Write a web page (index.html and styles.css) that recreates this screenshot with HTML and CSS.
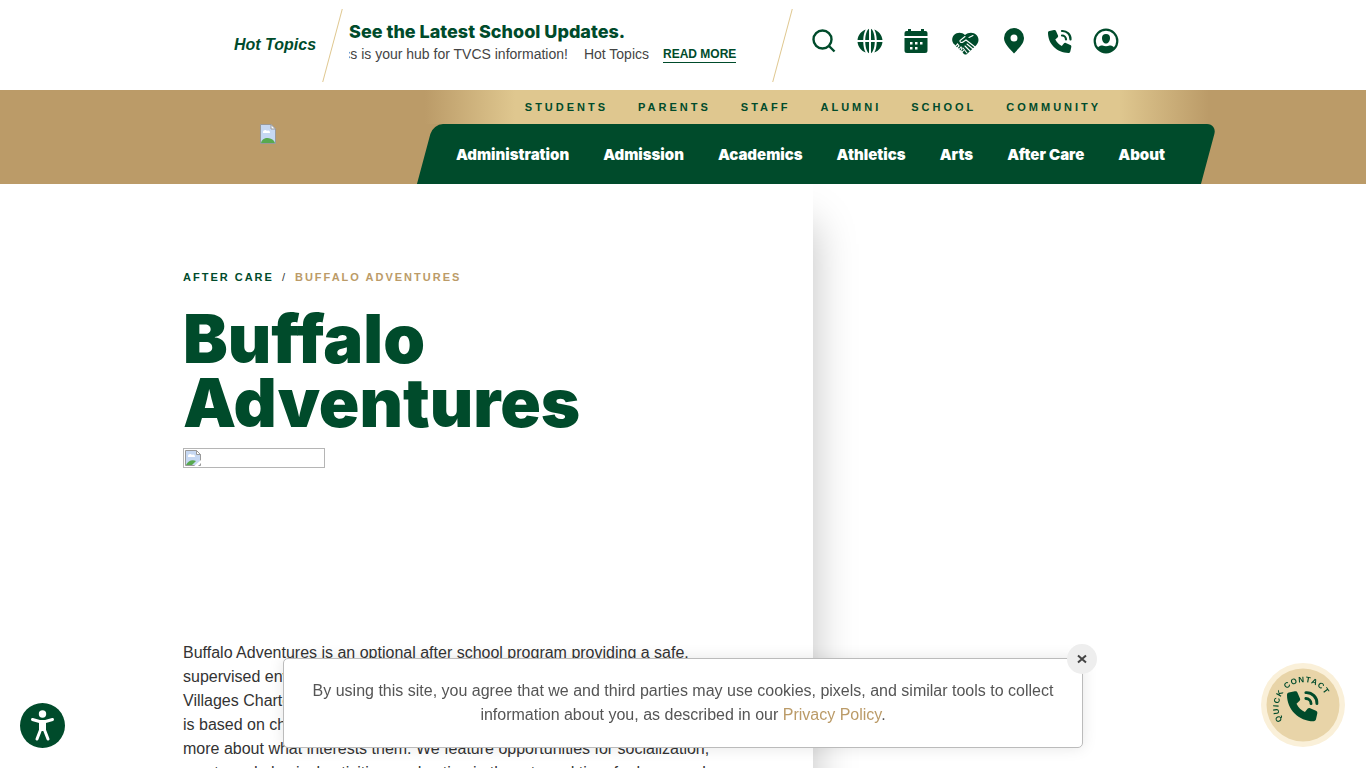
FILE: index.html
```html
<!DOCTYPE html>
<html lang="en">
<head>
    <meta charset="UTF-8">
    <meta name="viewport" content="width=device-width, initial-scale=1.0">
    <title>Buffalo Adventures</title>
    <link rel="stylesheet" href="styles.css">
</head>
<body>
    <header>
        <div class="topbar">
            <div class="hot-label">Hot Topics</div>
            <div class="slash"></div>
            <div class="ticker">
                <div class="ticker-title">See the Latest School Updates.</div>
                <div class="ticker-row">
                    <div class="ticker-text"><span>Hot Topics is your hub for TVCS information!</span><span>Hot Topics</span></div>
                    <a href="#" class="read-more">READ MORE</a>
                </div>
            </div>
            <div class="slash"></div>
            <div class="tools">
                <a href="#" aria-label="Search"><svg width="24" height="24" viewBox="0 0 24 24" fill="none" stroke="currentColor" stroke-width="2.4"><circle cx="10.500" cy="10.500" r="9"/><path d="M17 17L22.500 22.500"/></svg></a>
                <a href="#" aria-label="Language"><svg width="24" height="24" viewBox="0 0 512 512" overflow="visible" fill="currentColor"><path d="M235 -4C196 15 158 105 154 235h81zM277 -4c39 19 77 109 81 239h-81zM235 516c-39-19-77-109-81-239h81zM277 516c39-19 77-109 81-239h-81zM164 10C70 45 0 130-10 235h122c3-90 20-170 52-225zM348 10c94 35 164 120 174 225H400c-3-90-20-170-52-225zM164 502C70 467 0 382-10 277h122c3 90 20 170 52 225zM348 502c94-35 164-120 174-225H400c-3 90-20 170-52 225z"/></svg></a>
                <a href="#" aria-label="Calendar"><svg width="24" height="24" viewBox="0 0 24 24" fill="currentColor"><path d="M4 2V0h3v2h10V0h3v2h1.500a2 2 0 0 1 2 2v3H.5V4a2 2 0 0 1 2-2zM.5 9h23v12.500a2.500 2.500 0 0 1-2.500 2.500H3a2.500 2.500 0 0 1-2.500-2.500z"/><path fill="#fff" d="M6 13h2.500v2.500H6zM11 13h2.500v2.500H11zM16 13h2.500v2.500H16zM6 18h2.500v2.500H6zM11 18h2.500v2.500H11z"/></svg></a>
                <a href="#" aria-label="Giving"><svg width="30" height="24" viewBox="0 0 30 24" overflow="visible"><path fill="currentColor" d="M15 6C12 3 7 3 4 6c-3 3.500-2 7.500 1 10.500L14 25c1 .8 2 .8 3 0l9-8.500c3-3 3.500-7 .5-10.500-3-3-8-3-11.500 0z"/><path fill="none" stroke="#fff" stroke-width="1.100" stroke-linecap="round" d="M15 7.500l-5 4c-.5 2 1.500 2.500 3 1.500l3-2 9 7M19 8.500l4-2M17 15l6 5M15 17l5 5M13 19l4 5M3.500 15.500l2 2 2-2.500 1.500 2-2 2 2 1.500 2-2.500 1 2-1.500 2 1.500 1.500 1.500-2"/></svg></a>
                <a href="#" aria-label="Location"><svg width="24" height="24" viewBox="0 0 24 24" overflow="visible"><path fill="currentColor" fill-rule="evenodd" d="M12-1A10 10 0 0 0 2 9c0 6 6 11 10 15.500C16 20 22 15 22 9A10 10 0 0 0 12-1zm0 6.500a3.500 3.500 0 1 1 0 7 3.500 3.500 0 0 1 0-7z" /></svg></a>
                <a href="#" aria-label="Phone"><svg width="24" height="24" viewBox="0 0 24 24"><path fill="currentColor" d="M1.500 2L6 1c1-.2 1.700.2 2 1l2 4.500c.3.8.1 1.500-.5 2L7.300 10.500c1.500 3 3.600 5 6.500 6.500l2-2.500c.5-.6 1.200-.8 2-.5l4.500 2c.8.3 1.200 1 1 2l-1 4.500c-.2.800-.8 1.500-1.800 1.500C9 24 0 15 0 3.800c0-1 .6-1.600 1.500-1.800z"/><path fill="none" stroke="currentColor" stroke-width="2.200" stroke-linecap="round" d="M14 2a8 8 0 0 1 8.500 8.500M14 6.500a4 4 0 0 1 4 4"/></svg></a>
                <a href="#" aria-label="Account"><svg width="24" height="24" viewBox="0 0 24 24" overflow="visible"><circle cx="12" cy="12" r="11.300" fill="none" stroke="currentColor" stroke-width="2.200"/><path fill="currentColor" d="M12 5a4 4 0 0 0-4 4c0 3.500 2 5.500 4 5.500s4-2 4-5.500a4 4 0 0 0-4-4zM3.500 19c1.500-2 3-2.500 5-2.500 2 1 5 1 7 0 2 0 3.500.5 5 2.500-4.500 5.500-12.500 5.500-17 0z"/></svg></a>
            </div>
        </div>

        <div class="main-bar">
            <a href="#" class="logo" aria-label="Home">
                <svg width="16" height="20" viewBox="0 0 16 20"><path fill="#c6d8f3" stroke="#999" d="M.5.500h10.500l4.500 4.500v14.500H.5z"/><path fill="#fff" d="M3 8c0-2 3-3 4-1 2-1 3 0 3 2H3z"/><path fill="#58a94f" d="M1 19c1-5 8-7 13-2l1 2z"/><path fill="#fff" stroke="#999" d="M11 .5V5h4.500z"/></svg>
            </a>
            <div class="menus">
                <nav class="audience-nav">
                    <a href="#">STUDENTS</a>
                    <a href="#">PARENTS</a>
                    <a href="#">STAFF</a>
                    <a href="#">ALUMNI</a>
                    <a href="#">SCHOOL</a>
                    <a href="#">COMMUNITY</a>
                </nav>
                <nav class="main-nav">
                    <a href="#">Administration</a>
                    <a href="#">Admission</a>
                    <a href="#">Academics</a>
                    <a href="#">Athletics</a>
                    <a href="#">Arts</a>
                    <a href="#">After Care</a>
                    <a href="#">About</a>
                </nav>
            </div>
        </div>
    </header>

    <main class="content">
        <div class="breadcrumb"><a href="#">AFTER CARE</a><span class="sep">/</span><span class="current">BUFFALO ADVENTURES</span></div>
        <h1>Buffalo Adventures</h1>
        <div class="picture">
            <svg width="18" height="18" viewBox="0 0 18 18"><path fill="#c6d8f3" stroke="#999" d="M1.500 1.500h11l4 4v11h-15z"/><path fill="#fff" d="M4 7c0-2 3-3 4-1 2-1 3 0 3 2H4z"/><path fill="#58a94f" d="M2 16c2-4 6-6 10-4l-4 4z"/><path fill="#fff" d="M9 18l8-7v3l-4 4z"/><path fill="#fff" stroke="#999" d="M12.500 1.500v4h4z"/></svg>
        </div>
        <p>Buffalo Adventures is an optional after school program providing a safe,<br>
        supervised environment for students enrolled at The<br>
        Villages Charter School. The program<br>
        is based on choice and lets children learn<br>
        more about what interests them. We feature opportunities for socialization,<br>
        sports and physical activities, and acting in the arts and time for homework.</p>
    </main>

    <a href="#" class="accessibility" aria-label="Accessibility">
        <svg width="45" height="45" viewBox="0 0 45 45"><circle cx="22.500" cy="22.500" r="22.500" fill="#004b2b"/><circle cx="22.500" cy="11" r="3.700" fill="#fff"/><path fill="none" stroke="#fff" stroke-width="3" stroke-linecap="round" stroke-linejoin="round" d="M12.500 16.500l7 2h6l7-2M20.500 19v8l-3.500 9M24.500 19v8l3.500 9"/><path fill="#fff" d="M19 18h7v8l-2 2h-3l-2-2z"/></svg>
    </a>

    <a href="#" class="quick-contact">
        <svg width="84" height="84" viewBox="0 0 84 84">
            <circle cx="42" cy="42" r="42" fill="#faf0d9"/>
            <circle cx="42" cy="42" r="36.500" fill="#e8d4a8"/>
            <path id="arc" fill="none" d="M21.500 57.500A25 25 0 1 1 67 50"/>
            <text class="contact-text"><textPath href="#arc">QUICK CONTACT</textPath></text>
            <g transform="translate(26 27) scale(1.300)"><path fill="#004b2b" d="M1.500 2L6 1c1-.2 1.700.2 2 1l2 4.500c.3.8.1 1.500-.5 2L7.300 10.500c1.500 3 3.600 5 6.500 6.500l2-2.500c.5-.6 1.200-.8 2-.5l4.500 2c.8.3 1.200 1 1 2l-1 4.500c-.2.800-.8 1.500-1.800 1.500C9 24 0 15 0 3.800c0-1 .6-1.600 1.500-1.800z"/><path fill="none" stroke="#004b2b" stroke-width="2.200" stroke-linecap="round" d="M14.500 2a8 8 0 0 1 8.500 8.500M14.500 6.500a4 4 0 0 1 4 4"/></g>
        </svg>
    </a>

    <div class="cookie">
        <button type="button" class="cookie-close" aria-label="Close"><svg width="10" height="10" viewBox="0 0 10 10"><path fill="none" stroke="#444" stroke-width="2" d="M1 1.500l8 7M9 1.500l-8 7"/></svg></button>
        By using this site, you agree that we and third parties may use cookies, pixels, and similar tools to collect information about you, as described in our <a href="#">Privacy Policy</a>.
    </div>

    <script>
        document.querySelector('.cookie-close').addEventListener('click', function () {
            document.querySelector('.cookie').remove();
        });
    </script>
</body>
</html>
```
FILE: styles.css
```css
* {
    box-sizing: border-box;
}
body {
    margin: 0;
    height: 100vh;
    display: flex;
    flex-direction: column;
    font-family: "Liberation Sans", Arial, sans-serif;
    font-size: 16px;
    line-height: 24px;
    color: #333;
    background-color: #fff;
    overflow: hidden;
}
a {
    color: #004b2b;
    text-decoration: none;
}
header {
    position: relative;
    z-index: 2;
    background-color: #fff;
}

/* Top bar */
.topbar {
    display: flex;
    align-items: center;
    height: 90px;
    padding-left: calc(50% - 449px);
}
.hot-label {
    width: 98px;
    font-weight: bold;
    font-style: italic;
    color: #004b2b;
}
.slash {
    width: 1px;
    height: 73px;
    background-color: #dfc78f;
    transform: skewX(-15deg);
}
.ticker {
    width: 449px;
    padding: 0 0 4px 16px;
}
.ticker-title {
    font-family: Inter, sans-serif;
    font-size: 18px;
    font-weight: 800;
    line-height: 22px;
    color: #004b2b;
}
.ticker-row {
    display: flex;
    align-items: center;
    gap: 14px;
    height: 22px;
}
.ticker-text {
    display: flex;
    justify-content: flex-end;
    gap: 16px;
    width: 300px;
    overflow: hidden;
    white-space: nowrap;
    font-size: 14px;
    color: #444;
}
.read-more {
    border-bottom: 1px solid #004b2b;
    font-size: 12px;
    font-weight: bold;
    line-height: 16px;
}
.tools {
    display: flex;
    gap: 22px;
    margin-left: 29px;
    padding-bottom: 8px;
}
.tools a,
.tools svg {
    display: block;
}

/* Gold and green bar */
.main-bar {
    display: flex;
    background-color: #bb9b68;
    padding-left: calc(50% - 423px);
}
.logo {
    width: 165px;
    padding-top: 34px;
}
.audience-nav {
    display: flex;
    justify-content: center;
    gap: 30px;
    height: 34px;
    padding-right: 8px;
    font-size: 11px;
    font-weight: bold;
    line-height: 34px;
    letter-spacing: 3px;
    background: linear-gradient(90deg, #bb9b68 0, #dfc78f 90px, #dfc78f calc(100% - 90px), #bb9b68 100%);
}
.main-nav {
    position: relative;
    display: flex;
    gap: 34px;
    height: 60px;
    padding: 0 44px 0 31px;
    font-family: Inter, sans-serif;
    font-size: 15px;
    font-weight: 900;
    line-height: 62px;
}
.main-nav::before {
    content: "";
    position: absolute;
    inset: 0;
    background-color: #004b2b;
    border-radius: 10px 10px 0 0;
    transform: skewX(-15deg);
}
.main-nav a {
    position: relative;
    color: #fff;
}

/* Page content */
.content {
    flex: 1;
    width: calc(50% + 130px);
    padding: 81px 80px 0 calc(50vw - 500px);
    box-shadow: 0 40px 40px rgba(0, 0, 0, 0.25);
}
.breadcrumb {
    display: flex;
    gap: 8px;
    font-size: 11px;
    font-weight: bold;
    letter-spacing: 2px;
}
.sep {
    font-weight: normal;
}
.current {
    color: #bb9b68;
}
h1 {
    max-width: 450px;
    margin: 18px 0 13px;
    font-family: Inter, sans-serif;
    font-size: 67px;
    font-weight: 900;
    line-height: 64px;
    color: #004b2b;
}
.picture {
    width: 142px;
    height: 20px;
    border: 1px solid #b5b5b5;
}
.picture svg {
    display: block;
}
p {
    margin: 173px 0 0;
    white-space: nowrap;
}

/* Floating items */
.accessibility {
    position: fixed;
    left: 20px;
    bottom: 20px;
    z-index: 3;
}
.quick-contact {
    position: fixed;
    right: 21px;
    bottom: 21px;
    z-index: 3;
}
.accessibility svg,
.quick-contact svg {
    display: block;
}
.contact-text {
    font-size: 8px;
    font-weight: bold;
    letter-spacing: 1px;
    fill: #004b2b;
}
.cookie {
    position: fixed;
    left: 50%;
    bottom: 20px;
    z-index: 4;
    width: 800px;
    max-width: 95%;
    padding: 20px 28px;
    transform: translateX(-50%);
    border: 1px solid #bbb;
    border-radius: 5px;
    background-color: #fff;
    box-shadow: 0 0 15px rgba(0, 0, 0, 0.1);
    text-align: center;
    color: #555;
}
.cookie a {
    color: #bb9b68;
}
.cookie-close {
    position: absolute;
    top: -15px;
    right: -15px;
    display: flex;
    align-items: center;
    justify-content: center;
    width: 30px;
    height: 30px;
    padding: 0;
    border: 0;
    border-radius: 50%;
    background-color: #eee;
    cursor: pointer;
}
```
